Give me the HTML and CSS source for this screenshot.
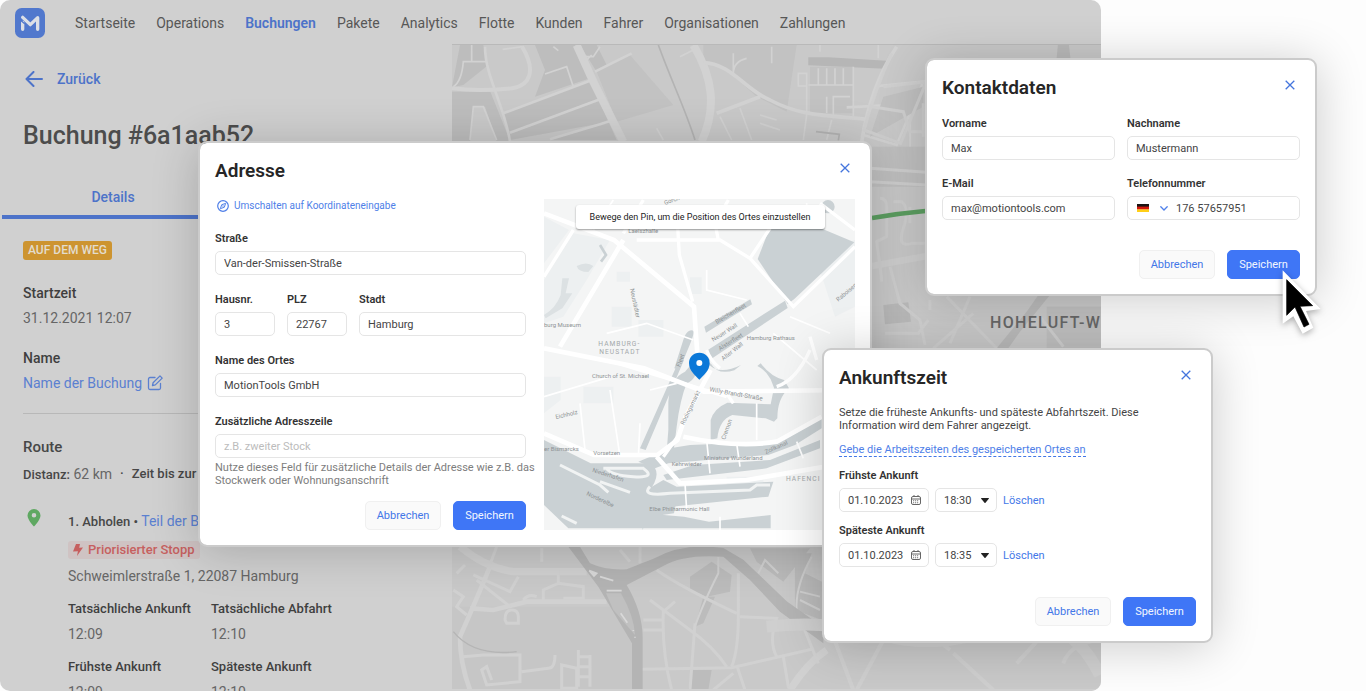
FILE: index.html
```html
<!DOCTYPE html>
<html lang="de">
<head>
<meta charset="utf-8">
<meta name="viewport" content="width=device-width, initial-scale=1">
<title>Buchung #6a1aab52</title>
<link rel="stylesheet" href="styles.css">
</head>
<body>
<div class="stage">
  <div class="app">
    <header class="topbar">
      <a class="logo" href="#" aria-label="MotionTools">
        <svg viewBox="0 0 90 90" aria-hidden="true"><rect width="90" height="90" rx="20" fill="#5178cd"/><path d="M23 64V43M68 64V29L46 50 23 28" fill="none" stroke="#dcdfe6" stroke-width="10" stroke-linecap="round" stroke-linejoin="round"/><path d="M15 35l14 12" stroke="#5178cd" stroke-width="4"/></svg>
      </a>
      <nav class="nav">
        <a href="#">Startseite</a>
        <a href="#">Operations</a>
        <a href="#" class="active" aria-current="page">Buchungen</a>
        <a href="#">Pakete</a>
        <a href="#">Analytics</a>
        <a href="#">Flotte</a>
        <a href="#">Kunden</a>
        <a href="#">Fahrer</a>
        <a href="#">Organisationen</a>
        <a href="#">Zahlungen</a>
      </nav>
    </header>
    <div class="workspace">
      <section class="details">
        <a class="back" href="#">
          <svg viewBox="0 0 18 16" width="18" height="16" aria-hidden="true"><path d="M17 8H2M8.500 1L1.500 8l7 7" fill="none" stroke="currentColor" stroke-width="2" stroke-linecap="round" stroke-linejoin="round"/></svg>
          Zurück
        </a>
        <h1>Buchung #6a1aab52</h1>
        <div class="tabs"><button class="tab" type="button">Details</button></div>
        <div class="summary">
          <span class="status">AUF DEM WEG</span>
          <dl class="facts">
            <div><dt>Startzeit</dt><dd>31.12.2021 12:07</dd></div>
            <div><dt>Name</dt><dd><a href="#">Name der Buchung
              <svg viewBox="0 0 16 16" width="16" height="16" aria-hidden="true"><path d="M8 2.500H3a1.500 1.500 0 0 0-1.500 1.500v9A1.500 1.500 0 0 0 3 14.500h9a1.500 1.500 0 0 0 1.500-1.500V8.500M5.500 10.500l.6-2.800L13 .9l2.200 2.200-6.900 6.800z" fill="none" stroke="currentColor" stroke-width="1.300" stroke-linejoin="round" stroke-linecap="round"/></svg></a></dd></div>
          </dl>
        </div>
        <div class="route">
          <h2>Route</h2>
          <p class="distance"><span><b>Distanz:</b> 62 km</span><b>·</b><b>Zeit bis zur</b></p>
          <article class="stop">
            <svg class="stop-pin" viewBox="0 0 14 18" width="14" height="18" aria-hidden="true"><path fill-rule="evenodd" d="M7 0a6.500 6.500 0 0 1 6.500 6.500C13.500 11 7 17.500 7 17.500S.5 11 .5 6.500A6.500 6.500 0 0 1 7 0zm0 4a2.300 2.300 0 1 0 0 4.600A2.300 2.300 0 0 0 7 4z" fill="#5fa862"/></svg>
            <div class="stop-body">
              <p class="stop-title"><b>1. Abholen •</b> <a href="#">Teil der B</a></p>
              <span class="priority"><svg viewBox="0 0 10 12" width="10" height="12" aria-hidden="true"><path d="M3 0h4L6.200 3.800 10 3.600 4 12l.9-4.800L0 7.400z" fill="currentColor"/></svg>Priorisierter Stopp</span>
              <p class="stop-address">Schweimlerstraße 1, 22087 Hamburg</p>
              <dl class="times">
                <div><dt>Tatsächliche Ankunft</dt><dd>12:09</dd></div>
                <div><dt>Tatsächliche Abfahrt</dt><dd>12:10</dd></div>
                <div><dt>Frühste Ankunft</dt><dd>12:09</dd></div>
                <div><dt>Späteste Ankunft</dt><dd>12:10</dd></div>
              </dl>
            </div>
          </article>
        </div>
      </section>
      <div class="map">
        <svg viewBox="1356 135 1947 1938" preserveAspectRatio="xMinYMin slice" role="img" aria-label="Karte">
          <rect x="1356" y="135" width="1947" height="1938" fill="#c9c9c9"/>
          <g transform="translate(1350 0)">
            <g fill="#bdbdbd">
              <path d="M30 135h70l15 60-75 60L6 262zM6 275h115l60 150H140l-35-105H70l-10 105H6z"/>
              <path d="M255 135h120l45 100-165 55 30-80zM160 340l260-100 80 180H300l180-55-300 55z"/>
              <path d="M390 135h50l30 60-30 20zM870 155h60v12h-60z"/>
              <path fill="#b6b6b6" d="M1075 172l60 0 175 10-5 24-230-10z"/>
              <path fill="#c2c2c2" d="M440 215l100-50 130 150-170 50zM760 135l280 0-30 200-90-45-90-80-70-30zM1080 200h130v140h-130z"/>
            </g>
            <g fill="none" stroke="#d2d2d2" stroke-width="5">
              <path stroke-width="12" d="M6 265c60 8 130 5 180 0 60-10 70-60 30-125"/>
              <path stroke-width="24" d="M380 135l50 110 90 180"/>
              <path stroke-width="24" d="M730 135c60 100 70 190 25 290"/>
              <path stroke-width="11" d="M760 188c80 0 130 85 200 112 90 48 160 45 290 58M1340 140c-60 90-90 190-105 285M930 290l-130 50"/>
              <path stroke-width="8" d="M105 140c0 90 60 180 75 285M160 340l260-98M180 398l270-100M300 418l150-45 30-10M435 215l110-55M1285 258l150-15M1190 322l100-5 75 35M1240 405l100 30 80-190"/>
              <path d="M65 135v50H40q-5 60-30 75M65 185h45M60 420l10-100h30l40 100M285 222l65-22 20 60M450 140l-20 30h-25M405 185l20-20M310 140l15 12M158 148l60-8M690 170l50-25M850 160v60q0-35 40-45M965 140v50M1285 135v40M1110 135v20M1105 205v50M1130 205v50M1155 205v50M1180 205v50M1210 200v148M1070 225v120l-10 75M1045 220h25v38h-25zM1075 255h135M1130 290v50M1150 355v-65h50M1145 360l-15 60M810 350l35 70M870 325l35 95M930 370l60 20M930 345l50 15M620 385l20 35M1380 300v150"/>
              <path stroke="#b3b3b3" d="M625 135c40 110 80 190 110 285M1098 395l70 8-3 18"/>
            </g>
          </g>
          <g transform="translate(2580 120)">
            <g fill="#bababa"><path d="M595 0h30l20 170-60-60zM70 795l75-8 8 58-78 8zM410 925l90-110 35-50h35l-90 110-35 50z"/></g>
            <path fill="#c0c0c0" d="M70 170l120-30v60L30 290zM35 320h165v120H35zM560 800h170v150H560z"/>
            <g fill="none" stroke="#cfcfcf" stroke-width="9">
              <path d="M95 40Q45 150 12 270l110 40 75-180M70 140l130-15M35 200l95 15 20 60h45M30 385l170 12M30 425l170 10M190 190v100"/>
              <path d="M60 475q20 0 20 25v90l-30 15 10 70 5 50M100 485h25q25 20 5 80t25 45h40M150 500v50"/>
              <path stroke-width="20" d="M36 678l165-30"/>
              <path d="M90 680l30 110 60 50 15 75M75 880h100l30-40M260 770l150 155M340 820l-120 105M540 830l70 90M330 770l-60 140M210 780v30"/>
            </g>
            <path d="M36 534q80-14 160-21" fill="none" stroke="#5c9e61" stroke-width="13"/>
            <text x="390" y="864" fill="#686868" font-size="48" font-weight="500" letter-spacing="4">HOHELUFT-W</text>
          </g>
          <g transform="translate(1350 1620)">
            <rect x="6" y="200" width="540" height="250" fill="#c6c6c6"/>
            <g fill="#bcbcbc"><path d="M720 110l65-45 60 40-5 50-70 15-50-20zM760 170h35l-35 80-25 10zM1035 40l50 0-20 60 60 30-10 110-80-30zM900 25h180l-80 100-80-60zM725 390h60l-10 60h-60z"/></g>
            <g fill="none" stroke="#d1d1d1" stroke-width="9">
              <path stroke-width="22" d="M30 20q80 65 160 75h220M1020 450q50-80 110-120"/>
              <path stroke-width="14" d="M120 80q-50 120-90 210 0 80 30 160M60 205l70 5 100-25h240"/>
              <path d="M140 20l-30 80M70 105l110 50 25-45M80 120l100 80M10 150l30 20-20 30 30 25M45 75L20 100M275 25v40M325 90v40l-45 20v30M325 130l75 10v35h-60M220 180q15-20 40-10M170 250h35v-20q0-20-20-20t-20 30zM40 350l60-5 110 0v80l-100 10-15-45 15-10 15 40M215 395l80-10q20 0 20-40M385 330v110M420 345v95M385 350h35M385 380h35M385 410h35M335 375v70h45v-60z"/>
              <path d="M620 90q70 50 240 130M600 180l120 90q70 50 110 110M675 185l-35 30q-5 120 25 235M865 100v130q0 100-20 150M575 388l270-5 240-55M735 250l-15 200M580 240h60M580 270h60M870 230l110 5q-25 70 0 115M1000 350l15 90M1060 260l45 110M510 30l30 35M570 20v50M860 375l25 75M850 400l-60 50"/>
              <path stroke-width="6" d="M805 50v50q-50 100-70 160M1040 210q-5-70 45-160M925 100l20-40 40 40M1050 155l60 15M1050 180l60 30"/>
            </g>
            <path d="M355 20h35l30 50q50 22 110 18l80-32q90-50 210-32l60 35 130 125 110 78v48L990 215 900 120 820 50q-120-8-180 28l-110 57q48 80 48 160v155h-32V310L445 140z" fill="#b4b4b4"/>
            <path d="M468 160h45q40 70 42 125L490 210z" fill="#c0c0c0"/>
            <path d="M418 92l22 8-8 8zM450 110l40 12M470 152h45M512 220l20 28M550 270v3M555 290v3" stroke="#d9d9d9" stroke-width="5" fill="#d9d9d9"/>
            <path d="M10 275q60 75 190 60" fill="none" stroke="#b5b5b5" stroke-width="4"/>
          </g>
          <g fill="none" stroke="#cfcfcf" stroke-width="12">
            <path stroke-width="36" d="M2300 1880q200-20 350 25t350-20 300 140"/>
            <path d="M2500 1910l60 160M2650 1920l-80 150M2700 1830l150 120M2860 1960l120 110M3070 1910l-100-120M3050 1990l120-130M3190 1990q20-60 110-70M2950 1920v-80"/>
          </g>
        </svg>
      </div>
    </div>
  </div>

  <section class="dialog dialog-address" role="dialog" aria-labelledby="t-address">
    <header class="dialog-head">
      <h2 id="t-address">Adresse</h2>
      <button class="close" type="button" aria-label="Schließen"><svg viewBox="0 0 10 10" width="10" height="10"><path d="M.7.7l8.600 8.600M9.300.7L.7 9.300" stroke="currentColor" stroke-width="1.300"/></svg></button>
    </header>
    <div class="address-body">
      <form class="address-form">
        <a class="switch" href="#">
          <svg viewBox="0 0 12 12" width="12" height="12" aria-hidden="true"><circle cx="6" cy="6" r="5.300" fill="none" stroke="currentColor" stroke-width="1.200"/><path d="M8.600 3.400L7.300 7.300 3.400 8.600l1.300-3.900z" fill="none" stroke="currentColor" stroke-width="1" stroke-linejoin="round"/><circle cx="6" cy="6" r=".7" fill="currentColor"/></svg>
          Umschalten auf Koordinateneingabe
        </a>
        <div class="field"><label for="street">Straße</label><input id="street" type="text" value="Van-der-Smissen-Straße"></div>
        <div class="row-city">
          <div class="field"><label for="nr">Hausnr.</label><input id="nr" type="text" value="3"></div>
          <div class="field"><label for="zip">PLZ</label><input id="zip" type="text" value="22767"></div>
          <div class="field"><label for="city">Stadt</label><input id="city" type="text" value="Hamburg"></div>
        </div>
        <div class="field"><label for="place">Name des Ortes</label><input id="place" type="text" value="MotionTools GmbH"></div>
        <div class="field"><label for="extra">Zusätzliche Adresszeile</label><input id="extra" type="text" placeholder="z.B. zweiter Stock">
          <p class="hint">Nutze dieses Feld für zusätzliche Details der Adresse wie z.B. das<br>Stockwerk oder Wohnungsanschrift</p></div>
        <div class="actions"><button class="btn" type="button">Abbrechen</button><button class="btn primary" type="button">Speichern</button></div>
      </form>
      <div class="minimap">
        <svg viewBox="12 27 933 993" preserveAspectRatio="xMidYMid slice" role="img" aria-label="Karte Hamburg">
          <rect x="12" y="27" width="933" height="993" fill="#f4f5f5"/>
          <path fill="#edf0f1" d="M12 80l75 40-75 100zM100 130l110 20-70 120-70 110-58 20V270zM230 245h40v30h-40zM295 390h75v50h-75zM450 262h35v50h-35zM215 350h60v60h-60zM12 560h50v70l-50 40zM130 590h90v50h-90zM820 180l125-30v200l-60 30zM560 860h110v40H560z"/>
          <g fill="#cad1d4">
            <path d="M688 117h160l95 40-180 170-20 15-90-135z"/>
            <circle cx="864" cy="50" r="20"/>
            <path d="M493 410l138-82 5 15-138 85zM500 482l235-150 8 22-225 150-12 10zM403 535l30-95q15-28 30-15l-10 30-35 85zM498 515q35 45 105 10l-20 16q-50 15-70-20z"/>
            <path d="M300 775l120-270 12 5-115 270zM385 720v-85q5-70 50-90l30-35 10 10q-5 50-35 60-20 50-30 130l-10 80-20-5z"/>
            <path d="M512 750v-60q10-35 50-52l130 5 10-50-10-25q-15-28-40-40l10-8q30 40 70 50l15 25q-35 30-35 90l-10 10-25-10-100-10q-40 15-45 70z"/>
            <path d="M390 775l60-10 240-10q60-10 155-75v35l-80 50-80 30-300 25-40 15-50-20zM370 855l90-30 230-15 150-60v25l-160 60-300 35zM310 905l60-35 40 20 290-15-15 45-290 30z"/>
            <path d="M12 750l140 70h180q40 30-10 90l90 10-10 50-70 10-25 40 5-50 120 10 75 15 185-20v40H85l-73-70z"/>
            <path fill="#dce1e3" d="M12 375q35-20 50-60l5-50 20 0-10 45 20 0-30 45-50 30zM110 228q30-15 50 0l-15 18q-30 0-35-18z"/>
            <path fill="none" stroke="#cad1d4" stroke-width="8" d="M180 165l18 30-15 20"/>
          </g>
          <path d="M60 825l120 60 25 22M180 875l90 32M65 978l45 22M330 890q-30 30 60 20l240-10 20-15h40M190 835h120q40 30-30 25t-80-25" fill="none" stroke="#f1f3f3" stroke-width="9"/>
          <g fill="none" stroke="#fff">
            <path stroke-width="14" d="M12 70l210 80 240 200 12 170M12 475l300 60 180 70 450-5M12 730l150 65h190l60-45 20-60 80-150M350 800l70 80 200-10 325-55M250 150L60 470M430 740q160 35 280 15l135-75"/>
            <path stroke-width="10" d="M100 120L12 260M250 130l60-100M290 150h250l90 55 130 145 185-180M630 205l60-90M413 110l5 85 40 140M840 40l105 80M535 150l-10-50 40-70M200 510l360 110M500 480q10 30 40 55M580 640l-20-30M710 590q60-20 100-110M810 440l20 70M370 800l50-70"/>
            <path stroke-width="5" d="M600 370l25 40M210 600l30 200M590 760l10 70M500 750l10 100M435 880l5 80M650 640v110M770 755l20 50M300 700l-5 100M12 620l200-60M460 450L320 400 200 430M500 240v60l120 30M220 30l-60 90M800 40v60M750 380l120 50M330 600l80-20M120 640l15 140M540 980v40M700 430l130 110"/>
          </g>
          <g fill="#8d9294" font-size="18">
            <text x="265" y="130">Laeiszhalle</text>
            <text x="12" y="411">burg Museum</text>
            <text x="620" y="450">Hamburg Rathaus</text>
            <text x="156" y="563">Church of St. Michael</text>
            <text x="160" y="796">Vorsetzen</text>
            <text x="12" y="782">er Bismarcks</text>
            <text x="395" y="828">Kehrwieder</text>
            <text x="492" y="811">Miniature Wunderland</text>
            <text x="328" y="964">Elbe Philharmonic Hall</text>
            <text x="508" y="604" transform="rotate(10 508 604)" font-size="19">Willy-Brandt-Straße</text>
            <text x="432" y="706" transform="rotate(-64 432 706)">Rödingsmarkt</text>
            <text x="555" y="750" transform="rotate(-70 555 750)">Cremon</text>
            <text x="270" y="297" transform="rotate(78 270 297)">Neustädter</text>
            <text x="520" y="455" transform="rotate(-32 520 455)">Neuer Wall</text>
            <text x="550" y="512" transform="rotate(-38 550 512)">Alter Wall</text>
            <text x="530" y="402" transform="rotate(-30 530 402)">Bleichenfleet</text>
            <text x="540" y="482" transform="rotate(-32 540 482)">Alsterfleet</text>
            <text x="420" y="532" transform="rotate(-70 420 532)">Fleet</text>
            <text x="895" y="335" transform="rotate(-40 895 335)">Raboisen</text>
            <text x="48" y="687" transform="rotate(-13 48 687)">Eichholz</text>
            <text x="156" y="845" transform="rotate(18 156 845)">Niederhafen</text>
            <text x="138" y="915" transform="rotate(25 138 915)">Norderelbe</text>
            <text x="678" y="792" transform="rotate(-24 678 792)">Zollkanal</text>
            <text x="375" y="45" transform="rotate(-20 375 45)">Gorch</text>
            <g fill="#a3a8aa" font-size="20" letter-spacing="3">
              <text x="175" y="468">HAMBURG-</text><text x="178" y="492">NEUSTADT</text><text x="738" y="874">HAFENCI</text>
            </g>
          </g>
          <path d="M478 488c18 0 31 14 31 31 0 24-20 38-31 50-11-12-31-26-31-50 0-17 13-31 31-31z" fill="#0b78d8"/>
          <circle cx="478" cy="519" r="9" fill="#fff"/>
        </svg>
        <p class="map-tip">Bewege den Pin, um die Position des Ortes einzustellen</p>
      </div>
    </div>
  </section>

  <section class="dialog dialog-contact" role="dialog" aria-labelledby="t-contact">
    <header class="dialog-head">
      <h2 id="t-contact">Kontaktdaten</h2>
      <button class="close" type="button" aria-label="Schließen"><svg viewBox="0 0 10 10" width="10" height="10"><path d="M.7.7l8.600 8.600M9.300.7L.7 9.300" stroke="currentColor" stroke-width="1.300"/></svg></button>
    </header>
    <form class="contact-grid">
      <div class="field"><label for="first">Vorname</label><input id="first" type="text" value="Max"></div>
      <div class="field"><label for="last">Nachname</label><input id="last" type="text" value="Mustermann"></div>
      <div class="field"><label for="mail">E-Mail</label><input id="mail" type="email" value="max@motiontools.com"></div>
      <div class="field"><label for="phone">Telefonnummer</label>
        <div class="phone">
          <button type="button" aria-label="Ländervorwahl Deutschland">
            <svg viewBox="0 0 12 8" width="12" height="8" aria-hidden="true"><path fill="#1b1413" d="M0 0h12v3H0z"/><path fill="#d3180c" d="M0 2.600h12v3H0z"/><path fill="#ffcf17" d="M0 5.400h12V8H0z"/></svg>
            <svg viewBox="0 0 8 5" width="8" height="5" aria-hidden="true"><path d="M.8.800L4 4 7.200.8" fill="none" stroke="#4f80ea" stroke-width="1.300" stroke-linecap="round"/></svg>
          </button>
          <input id="phone" type="tel" value="176 57657951">
        </div>
      </div>
    </form>
    <div class="actions spaced"><button class="btn" type="button">Abbrechen</button><button class="btn primary" type="button">Speichern</button></div>
  </section>

  <section class="dialog dialog-arrival" role="dialog" aria-labelledby="t-arrival">
    <header class="dialog-head">
      <h2 id="t-arrival">Ankunftszeit</h2>
      <button class="close" type="button" aria-label="Schließen"><svg viewBox="0 0 10 10" width="10" height="10"><path d="M.7.7l8.600 8.600M9.300.7L.7 9.300" stroke="currentColor" stroke-width="1.300"/></svg></button>
    </header>
    <p class="lead">Setze die früheste Ankunfts- und späteste Abfahrtszeit. Diese Information wird dem Fahrer angezeigt.</p>
    <a class="dashed" href="#">Gebe die Arbeitszeiten des gespeicherten Ortes an</a>
    <div class="field time-field"><label for="d1">Frühste Ankunft</label>
      <div class="time-row">
        <div class="date"><input id="d1" type="text" value="01.10.2023"><svg viewBox="0 0 10 10" width="10" height="10" aria-hidden="true"><rect x=".5" y="1.500" width="9" height="8" rx="1.500" fill="none" stroke="#666"/><path d="M.5 4h9M3 0v2M7 0v2" stroke="#666"/><path d="M2 5.750h6M2 7.750h6" stroke="#777" stroke-dasharray="1.200 .8"/></svg></div>
        <select aria-label="Uhrzeit frühste Ankunft"><option>18:30</option></select>
        <a href="#">Löschen</a>
      </div>
    </div>
    <div class="field time-field"><label for="d2">Späteste Ankunft</label>
      <div class="time-row">
        <div class="date"><input id="d2" type="text" value="01.10.2023"><svg viewBox="0 0 10 10" width="10" height="10" aria-hidden="true"><rect x=".5" y="1.500" width="9" height="8" rx="1.500" fill="none" stroke="#666"/><path d="M.5 4h9M3 0v2M7 0v2" stroke="#666"/><path d="M2 5.750h6M2 7.750h6" stroke="#777" stroke-dasharray="1.200 .8"/></svg></div>
        <select aria-label="Uhrzeit späteste Ankunft"><option>18:35</option></select>
        <a href="#">Löschen</a>
      </div>
    </div>
    <div class="actions spaced"><button class="btn" type="button">Abbrechen</button><button class="btn primary" type="button">Speichern</button></div>
  </section>

  <svg class="cursor" viewBox="1110 680 129 210" aria-hidden="true"><path fill="#fff" d="M1118 690v160l32-22 28 52 32-18-22-50 44-6z"/><path d="M1130 718v107l25-25 27 60 15-8-27-54 38-2z" stroke="#000" stroke-width="2"/></svg>
</div>
</body>
</html>
```
FILE: styles.css
```css
* { box-sizing: border-box; }
body {
  margin: 0;
  background: #fdfdfd;
  color: #333;
  font-family: Roboto, "Noto Sans", sans-serif;
  font-size: 14px;
}
h1, h2, p, dl, dd { margin: 0; }
a { color: inherit; text-decoration: none; }
button, input, select { font: inherit; color: inherit; margin: 0; }
button { cursor: pointer; }

.stage { position: relative; min-height: 100vh; overflow: hidden; }

/* Booking page behind the dialogs */
.app {
  display: flex;
  flex-direction: column;
  width: 80.6%;
  height: 100vh;
  overflow: hidden;
  border-radius: 10px;
  background: #d0d0d0;
  color: #666;
}
.topbar { display: flex; align-items: center; gap: 30px; height: 44px; padding: 2px 15px 0; flex: none; }
.logo { width: 30px; height: 30px; }
.logo svg { display: block; width: 100%; height: 100%; }
.nav { display: flex; gap: 21px; line-height: 24px; color: #575757; white-space: nowrap; }
.nav .active { color: #4d73c9; font-weight: 600; }
.workspace { display: flex; flex: 1; min-height: 0; }
.details { width: 452px; flex: none; line-height: 24px; padding-top: 23px; }
.back { display: flex; align-items: center; gap: 14px; padding-left: 25px; color: #4d73c9; font-weight: 500; }
.details h1 { margin: 29px 0 0 23px; font-size: 25px; line-height: 32px; font-weight: 500; color: #4c4c4c; }
.tabs { display: flex; margin: 30px 0 0 2px; }
.tab {
  width: 222px;
  height: 37px;
  padding: 0 0 4px;
  border: 0;
  border-bottom: 4px solid #4d73c9;
  background: none;
  color: #4d73c9;
  font-weight: 500;
}
.summary { margin: 22px 23px 0; padding-bottom: 18px; border-bottom: 1px solid #b8b8b8; }
.status {
  display: inline-block;
  padding: 0 5px;
  border-radius: 3px;
  background: #cd9430;
  color: #e3dccd;
  font-size: 12px;
  font-weight: 500;
  line-height: 19px;
  vertical-align: top;
}
.facts { display: grid; gap: 16px; margin-top: 16px; }
.facts dt, .times dt { color: #3f3f3f; font-weight: 500; }
.facts dd { margin-top: 1px; }
.facts a { display: flex; align-items: center; gap: 5px; color: #5b80d0; }
.route { padding: 21px 23px 0; color: #666; }
.route h2 { font-size: 15px; font-weight: 500; line-height: 24px; color: #474747; }
.route b { font-size: 13px; font-weight: 500; color: #474747; }
.distance { display: flex; gap: 8px; margin-top: 3px; white-space: nowrap; }
.stop { display: grid; grid-template-columns: 45px 1fr; margin-top: 22px; }
.stop-pin { margin-left: 4px; }
.stop-title { white-space: nowrap; }
.stop-title a { color: #5b80d0; }
.priority {
  display: inline-flex;
  align-items: center;
  gap: 5px;
  height: 18px;
  margin-top: 7px;
  padding: 0 5px;
  border-radius: 3px;
  background: #cfc3c3;
  color: #c65f5f;
  font-size: 13px;
  font-weight: 500;
  vertical-align: top;
}
.stop-address { margin-top: 5px; }
.times { display: grid; grid-template-columns: 143px 1fr; row-gap: 9px; margin-top: 9px; white-space: nowrap; }
.times dt { font-size: 13px; }
.times dd { margin-top: 1px; }
.map { flex: 1; min-width: 0; border-top: 1px solid #b9b9b9; border-bottom: 2px solid #d0d0d0; }
.map svg { display: block; width: 100%; height: 100%; }

/* Dialogs */
.dialog {
  position: absolute;
  padding: 15px;
  border: 2px solid #cbcbcb;
  border-radius: 9px;
  background: #fff;
  background-clip: padding-box;
  box-shadow: 0 4px 48px rgba(0, 0, 0, 0.2);
  font-size: 11px;
}
.dialog-address { left: 198px; top: 141px; width: 674px; }
.dialog-contact { left: 925px; top: 58px; width: 392px; }
.dialog-arrival { left: 822px; top: 348px; width: 391px; }
.dialog-head { display: flex; justify-content: space-between; height: 24px; }
.dialog-head h2 { font-size: 19px; line-height: 26px; font-weight: 600; color: #262626; }
.close { display: flex; align-items: center; width: 18px; height: 20px; padding: 0 5px 0 3px; border: 0; background: none; color: #4475dd; }
.close svg { flex: none; }

.field { display: flex; flex-direction: column; }
.field label { font-size: 11px; font-weight: 600; line-height: 18px; color: #333; margin-bottom: 3px; }
.field input, .field select {
  width: 100%;
  height: 24px;
  padding: 0 8px;
  border: 1px solid #e5e5e5;
  border-radius: 5px;
  background: #fff;
  color: #444;
  outline: 0;
}
.field input::placeholder { color: #bcbcbc; opacity: 1; }
.hint { margin-top: 3px; color: #7d7d7d; line-height: 13px; white-space: nowrap; }

.actions { display: flex; justify-content: flex-end; gap: 12px; }
.actions.spaced { margin-top: 30px; }
.btn {
  height: 29px;
  width: 76px;
  padding: 0;
  border: 1px solid #f0f0f0;
  border-radius: 5px;
  background: #fafafa;
  color: #4377e8;
}
.btn.primary { width: 73px; border-color: #3f76f6; background: #3f76f6; color: #f2f6ff; }

.address-body { display: grid; grid-template-columns: 1fr 1fr; gap: 18px; margin-top: 17px; }
.address-form { display: flex; flex-direction: column; min-width: 0; }
.switch { display: flex; align-items: center; gap: 5px; margin: 0 0 17px 2px; font-size: 10px; line-height: 14px; color: #4f7fe8; }
.address-form .field, .row-city { margin-bottom: 16px; }
.row-city { display: grid; grid-template-columns: 60px 60px 1fr; gap: 12px; }
.row-city .field { margin-bottom: 0; }
.address-form .actions { margin-top: -2px; }
.minimap { position: relative; min-height: 331px; }
.minimap > svg { position: absolute; inset: 0; width: 100%; height: 100%; }
.map-tip {
  position: absolute;
  top: 6px;
  left: 50%;
  width: 249px;
  margin-left: -124px;
  border-radius: 3px;
  background: #fff;
  box-shadow: 0 1px 2px rgba(0, 0, 0, 0.4);
  color: #222;
  font-size: 9px;
  line-height: 24px;
  text-align: center;
  white-space: nowrap;
}

.contact-grid { display: grid; grid-template-columns: 1fr 1fr; gap: 15px 12px; margin-top: 16px; }
.phone { display: flex; height: 24px; border: 1px solid #e5e5e5; border-radius: 5px; }
.phone button { display: flex; align-items: center; gap: 11px; flex: none; padding: 0 0 0 9px; border: 0; background: none; }
.phone input { height: 22px; border: 0; }

.lead { margin-top: 17px; line-height: 13px; max-width: 310px; color: #444; }
.dashed { display: table; margin-top: 11px; border-bottom: 1px dashed #4377e8; line-height: 13px; color: #4f7fe8; }
.time-field { margin-top: 10px; }
.time-row { display: flex; align-items: center; gap: 6px; }
.time-row a { color: #4377e8; }
.date { display: flex; align-items: center; width: 90px; height: 24px; padding-right: 7px; border: 1px solid #e5e5e5; border-radius: 5px; }
.date input { flex: 1; min-width: 0; height: 22px; padding-right: 0; border: 0; }
.date svg { flex: none; }
.time-row select {
  width: 62px;
  appearance: none;
  background: url("data:image/svg+xml,%3Csvg xmlns='http://www.w3.org/2000/svg' viewBox='0 0 8 5'%3E%3Cpath d='M.5 0h7a.5.5 0 0 1 .3.800L4.500 4.700a.7.7 0 0 1-1 0L.2.800A.5.5 0 0 1 .5 0z' fill='%23222'/%3E%3C/svg%3E") no-repeat right 7px center / 8px 5px #fff;
}

.cursor { position: absolute; left: 1280px; top: 267px; width: 43px; height: 70px; filter: drop-shadow(0 2px 3px rgba(0, 0, 0, 0.3)); }
```
